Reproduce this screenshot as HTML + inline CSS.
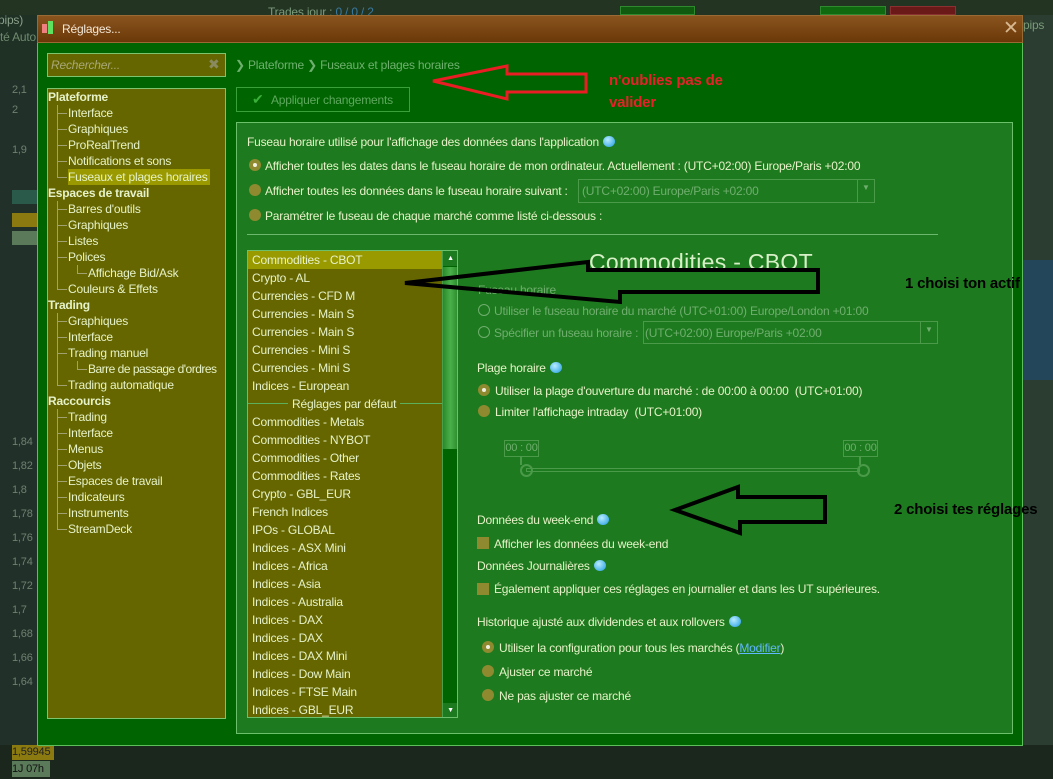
<!DOCTYPE html>
<html><head><meta charset="utf-8"><style>
*{margin:0;padding:0;box-sizing:border-box}
body{width:1053px;height:779px;overflow:hidden;background:#1f3024;font-family:"Liberation Sans",sans-serif;font-size:12px;color:#e6f2c8;position:relative;letter-spacing:-0.2px}
.a{position:absolute;white-space:nowrap}
.dlg{position:absolute;left:37px;top:15px;width:986px;height:731px;background:#006400;border:1px solid #5cbf5c;border-top:none}
.title{position:absolute;left:37px;top:15px;width:986px;height:28px;background:linear-gradient(#8a541e,#6a3808);border:1px solid #9a6a34}
.tree{left:47px;top:88px;width:179px;height:631px;background:#666600;border:1px solid #7ec46e}
.tr{position:absolute;height:16px;line-height:16px}
.c::before{content:"";position:absolute;left:-11px;top:8px;width:10px;border-top:1px solid #a0a070}
.vl{position:absolute;border-left:1px solid #a0a070}
.panel{left:236px;top:122px;width:777px;height:612px;background:#1e7a1e;border:1px solid #6cc06c}
.rad{position:absolute;width:12px;height:12px;border-radius:50%;background:#8f8a30}
.rad.on::after{content:"";position:absolute;left:4px;top:4px;width:4px;height:4px;border-radius:50%;background:#f0f0e0}
.bub{display:inline-block;width:12px;height:11px;border-radius:50%;background:radial-gradient(circle at 40% 35%,#b8ecff,#1a9ae0);vertical-align:-1px;margin-left:4px}
.list{left:247px;top:250px;width:211px;height:468px;background:#666600;border:1px solid #6cc06c;overflow:hidden}
.li{position:absolute;left:4px;height:18px;line-height:18px;font-size:12px}
.dis{color:#6fae6f}
.cb{position:absolute;width:12px;height:12px;background:#8f8a30}
</style></head><body>
<div class="a" style="left:0;top:0;width:1053px;height:15px;background:#233423"></div>
<div class="a" style="left:-2px;top:13px;color:#8aa08a">pips)</div>
<div class="a" style="left:0;top:30px;color:#6f8a6f">té Auto</div>
<div class="a" style="left:268px;top:5px;color:#7a9a7a">Trades jour : <span style="color:#3a7aa0">0 / 0 / 2</span></div>
<div class="a" style="left:620px;top:6px;width:75px;height:9px;background:#0f5a0f;border:1px solid #2f8a2f"></div>
<div class="a" style="left:820px;top:6px;width:66px;height:9px;background:#0f6a0f;border:1px solid #2f8a2f"></div>
<div class="a" style="left:890px;top:6px;width:66px;height:9px;background:#6a1818;border:1px solid #8a3030"></div>
<div class="a" style="left:1022px;top:15px;width:31px;height:764px;background:#2a3d30"></div>
<div class="a" style="left:1023px;top:18px;color:#7a9a7a">pips</div>
<div class="a" style="left:1023px;top:260px;width:30px;height:120px;background:#24465a"></div>
<div class="a" style="left:0;top:745px;width:1053px;height:34px;background:#1b261d"></div>
<div class="a" style="left:12px;top:744px;width:42px;height:16px;background:#8a7a10;color:#222;font-size:11px;line-height:16px">1,59945</div>
<div class="a" style="left:12px;top:761px;width:38px;height:16px;background:#5a7a5a;color:#111;font-size:11px;line-height:16px">1J 07h</div>
<div class="a" style="left:0;top:80px;width:37px;height:665px;background:#22302a"></div>
<div class="a" style="left:12px;top:80px;color:#6f806f;font-size:11px;line-height:20px">2,1<br>2<br><br>1,9</div>
<div class="a" style="left:12px;top:190px;width:25px;height:14px;background:#2a5a4a"></div>
<div class="a" style="left:12px;top:213px;width:25px;height:14px;background:#8a7a10"></div>
<div class="a" style="left:12px;top:231px;width:25px;height:14px;background:#5a7a5a"></div>
<div class="a" style="left:12px;top:430px;color:#6f806f;font-size:11px;line-height:24px">1,84<br>1,82<br>1,8<br>1,78<br>1,76<br>1,74<br>1,72<br>1,7<br>1,68<br>1,66<br>1,64</div>
<div class="dlg"></div>
<div class="title"></div>
<div class="a" style="left:42px;top:24px;width:5px;height:9px;background:#f08080"></div>
<div class="a" style="left:48px;top:21px;width:5px;height:13px;background:#60e060"></div>
<div class="a" style="left:62px;top:22px;color:#f4e8d8">Réglages...</div>
<div class="a" style="left:1003px;top:17px;color:#d8b890;font-size:19px">✕</div>
<div class="a" style="left:47px;top:53px;width:179px;height:24px;background:#666600;border:1px solid #7ec46e"></div>
<div class="a" style="left:51px;top:58px;color:#a8a878;font-style:italic">Rechercher...</div>
<div class="a" style="left:208px;top:56px;color:#8a8a60;font-size:14px">✖</div>
<div class="a tree"></div>
<div class="a" style="left:48px;top:89px;width:179px">
<div class="vl" style="left:9px;top:16px;height:73px"></div>
<div class="vl" style="left:9px;top:112px;height:89px"></div>
<div class="vl" style="left:29px;top:176px;height:9px"></div>
<div class="vl" style="left:9px;top:224px;height:73px"></div>
<div class="vl" style="left:29px;top:272px;height:9px"></div>
<div class="vl" style="left:9px;top:320px;height:121px"></div>
</div>
<div class="a" style="left:48px;top:89px;width:178px">
<div class="tr" style="top:0;left:0;font-weight:bold">Plateforme</div>
<div class="tr c" style="top:16px;left:20px">Interface</div>
<div class="tr c" style="top:32px;left:20px">Graphiques</div>
<div class="tr c" style="top:48px;left:20px">ProRealTrend</div>
<div class="tr c" style="top:64px;left:20px">Notifications et sons</div>
<div class="tr c" style="top:80px;left:20px;background:#9a9a00;padding-right:2px">Fuseaux et plages horaires</div>
<div class="tr" style="top:96px;left:0;font-weight:bold">Espaces de travail</div>
<div class="tr c" style="top:112px;left:20px">Barres d'outils</div>
<div class="tr c" style="top:128px;left:20px">Graphiques</div>
<div class="tr c" style="top:144px;left:20px">Listes</div>
<div class="tr c" style="top:160px;left:20px">Polices</div>
<div class="tr c" style="top:176px;left:40px">Affichage Bid/Ask</div>
<div class="tr c" style="top:192px;left:20px">Couleurs &amp; Effets</div>
<div class="tr" style="top:208px;left:0;font-weight:bold">Trading</div>
<div class="tr c" style="top:224px;left:20px">Graphiques</div>
<div class="tr c" style="top:240px;left:20px">Interface</div>
<div class="tr c" style="top:256px;left:20px">Trading manuel</div>
<div class="tr c" style="top:272px;left:40px;letter-spacing:-0.5px">Barre de passage d'ordres</div>
<div class="tr c" style="top:288px;left:20px">Trading automatique</div>
<div class="tr" style="top:304px;left:0;font-weight:bold">Raccourcis</div>
<div class="tr c" style="top:320px;left:20px">Trading</div>
<div class="tr c" style="top:336px;left:20px">Interface</div>
<div class="tr c" style="top:352px;left:20px">Menus</div>
<div class="tr c" style="top:368px;left:20px">Objets</div>
<div class="tr c" style="top:384px;left:20px">Espaces de travail</div>
<div class="tr c" style="top:400px;left:20px">Indicateurs</div>
<div class="tr c" style="top:416px;left:20px">Instruments</div>
<div class="tr c" style="top:432px;left:20px">StreamDeck</div>
</div>
<div class="a" style="left:235px;top:58px;color:#6fb06f;font-size:12px">❯ Plateforme ❯ Fuseaux et plages horaires</div>
<div class="a" style="left:236px;top:87px;width:174px;height:25px;border:1px solid #3aa03a"></div>
<div class="a" style="left:252px;top:91px;color:#3ab03a;font-size:14px">✔</div>
<div class="a" style="left:271px;top:93px;color:#5fa85f">Appliquer changements</div>
<div class="a panel"></div>
<div class="a" style="left:247px;top:135px">Fuseau horaire utilisé pour l'affichage des données dans l'application<span class="bub"></span></div>
<div class="rad on" style="left:249px;top:159px"></div>
<div class="a" style="left:265px;top:159px">Afficher toutes les dates dans le fuseau horaire de mon ordinateur. Actuellement : (UTC+02:00) Europe/Paris +02:00</div>
<div class="rad" style="left:249px;top:184px"></div>
<div class="a" style="left:265px;top:184px">Afficher toutes les données dans le fuseau horaire suivant :</div>
<div class="a" style="left:578px;top:179px;width:297px;height:24px;border:1px solid #4a9a4a"></div>
<div class="a dis" style="left:582px;top:184px">(UTC+02:00) Europe/Paris +02:00</div>
<div class="a" style="left:857px;top:180px;height:22px;border-left:1px solid #4a9a4a;width:1px"></div>
<div class="a dis" style="left:862px;top:183px;font-size:8px">▼</div>
<div class="rad" style="left:249px;top:209px"></div>
<div class="a" style="left:265px;top:209px">Paramétrer le fuseau de chaque marché comme listé ci-dessous :</div>
<div class="a" style="left:247px;top:234px;width:691px;border-top:1px solid #6cb86c"></div>
<div class="a list">
<div class="a" style="left:0;top:0;width:194px;height:18px;background:#999900"></div>
<div class="li" style="top:0">Commodities - CBOT</div>
<div class="li" style="top:18px">Crypto - AL</div>
<div class="li" style="top:36px">Currencies - CFD M</div>
<div class="li" style="top:54px">Currencies - Main S</div>
<div class="li" style="top:72px">Currencies - Main S</div>
<div class="li" style="top:90px">Currencies - Mini S</div>
<div class="li" style="top:108px">Currencies - Mini S</div>
<div class="li" style="top:126px">Indices - European</div>
<div class="a" style="left:0;top:152px;width:194px;border-top:1px solid #5cb05c"></div>
<div class="li" style="top:144px;left:40px;background:#666600;padding:0 4px">Réglages par défaut</div>
<div class="li" style="top:162px">Commodities - Metals</div>
<div class="li" style="top:180px">Commodities - NYBOT</div>
<div class="li" style="top:198px">Commodities - Other</div>
<div class="li" style="top:216px">Commodities - Rates</div>
<div class="li" style="top:234px">Crypto - GBL_EUR</div>
<div class="li" style="top:252px">French Indices</div>
<div class="li" style="top:270px">IPOs - GLOBAL</div>
<div class="li" style="top:288px">Indices - ASX Mini</div>
<div class="li" style="top:306px">Indices - Africa</div>
<div class="li" style="top:324px">Indices - Asia</div>
<div class="li" style="top:342px">Indices - Australia</div>
<div class="li" style="top:360px">Indices - DAX</div>
<div class="li" style="top:378px">Indices - DAX</div>
<div class="li" style="top:396px">Indices - DAX Mini</div>
<div class="li" style="top:414px">Indices - Dow Main</div>
<div class="li" style="top:432px">Indices - FTSE Main</div>
<div class="li" style="top:450px">Indices - GBL_EUR</div>
<div class="a" style="left:194px;top:0;width:16px;height:467px;background:#006400;border-left:1px solid #4aa04a"></div>
<div class="a" style="left:195px;top:16px;width:15px;height:182px;background:linear-gradient(90deg,#2a8a2a,#4ab04a,#2a8a2a)"></div>
<div class="a" style="left:195px;top:0;width:15px;height:15px;background:#1e7a1e;color:#fff;font-size:7px;text-align:center;line-height:15px">▲</div>
<div class="a" style="left:195px;top:452px;width:15px;height:15px;background:#1e7a1e;color:#fff;font-size:7px;text-align:center;line-height:15px">▼</div>
</div>
<div class="a" style="left:589px;top:249px;font-size:23px;color:#d8f0c8;letter-spacing:0.3px">Commodities - CBOT</div>
<div class="a dis" style="left:478px;top:283px">Fuseau horaire</div>
<div class="a dis" style="left:478px;top:304px;width:12px;height:12px;border:1px solid #6fae6f;border-radius:50%"></div>
<div class="a dis" style="left:494px;top:304px">Utiliser le fuseau horaire du marché (UTC+01:00) Europe/London +01:00</div>
<div class="a dis" style="left:478px;top:326px;width:12px;height:12px;border:1px solid #6fae6f;border-radius:50%"></div>
<div class="a dis" style="left:494px;top:326px">Spécifier un fuseau horaire :</div>
<div class="a" style="left:643px;top:321px;width:295px;height:23px;border:1px solid #4a9a4a"></div>
<div class="a dis" style="left:645px;top:326px">(UTC+02:00) Europe/Paris +02:00</div>
<div class="a" style="left:920px;top:322px;height:21px;border-left:1px solid #4a9a4a;width:1px"></div>
<div class="a dis" style="left:925px;top:325px;font-size:8px">▼</div>
<div class="a" style="left:477px;top:361px">Plage horaire<span class="bub"></span></div>
<div class="rad on" style="left:478px;top:384px"></div>
<div class="a" style="left:495px;top:384px">Utiliser la plage d'ouverture du marché : de 00:00 à 00:00&nbsp; (UTC+01:00)</div>
<div class="rad" style="left:478px;top:405px"></div>
<div class="a" style="left:495px;top:405px">Limiter l'affichage intraday&nbsp; (UTC+01:00)</div>
<div class="a dis" style="left:504px;top:440px;width:35px;height:17px;border:1px solid #4a9a4a;font-size:11px;text-align:center;line-height:15px">00 : 00</div>
<div class="a dis" style="left:843px;top:440px;width:35px;height:17px;border:1px solid #4a9a4a;font-size:11px;text-align:center;line-height:15px">00 : 00</div>
<div class="a" style="left:520px;top:457px;height:8px;border-left:2px solid #4a9a4a"></div>
<div class="a" style="left:859px;top:457px;height:8px;border-left:2px solid #4a9a4a"></div>
<div class="a" style="left:526px;top:468px;width:334px;height:4px;border:1px solid #4a9a4a"></div>
<div class="a" style="left:520px;top:464px;width:13px;height:13px;border:2px solid #4a9a4a;border-radius:50%"></div>
<div class="a" style="left:857px;top:464px;width:13px;height:13px;border:2px solid #4a9a4a;border-radius:50%"></div>
<div class="a" style="left:477px;top:513px">Données du week-end<span class="bub"></span></div>
<div class="cb" style="left:477px;top:537px"></div>
<div class="a" style="left:494px;top:537px">Afficher les données du week-end</div>
<div class="a" style="left:477px;top:559px">Données Journalières<span class="bub"></span></div>
<div class="cb" style="left:477px;top:583px"></div>
<div class="a" style="left:494px;top:582px">Également appliquer ces réglages en journalier et dans les UT supérieures.</div>
<div class="a" style="left:477px;top:615px">Historique ajusté aux dividendes et aux rollovers<span class="bub"></span></div>
<div class="rad on" style="left:482px;top:641px"></div>
<div class="a" style="left:499px;top:641px">Utiliser la configuration pour tous les marchés (<span style="color:#60b8ff;text-decoration:underline">Modifier</span>)</div>
<div class="rad" style="left:482px;top:665px"></div>
<div class="a" style="left:499px;top:665px">Ajuster ce marché</div>
<div class="rad" style="left:482px;top:689px"></div>
<div class="a" style="left:499px;top:689px">Ne pas ajuster ce marché</div>
<svg class="a" style="left:0;top:0" width="1053" height="779">
<polygon points="433,81 507,66 507,74 586,74 586,92 507,92 507,99" fill="none" stroke="#ea1c24" stroke-width="3"/>
<polygon points="405,283 588,262 588,270 818,270 818,292 620,292 620,302" fill="none" stroke="#000" stroke-width="4"/>
<polygon points="675,510 738,487 738,497 825,497 825,522 740,522 740,533" fill="none" stroke="#000" stroke-width="4"/>
</svg>
<div class="a" style="left:609px;top:70px;color:#e8202a;font-weight:bold;font-size:15px;line-height:22px">n'oublies pas de<br>valider</div>
<div class="a" style="left:905px;top:275px;color:#000;font-weight:bold;font-size:15px">1 choisi ton actif</div>
<div class="a" style="left:894px;top:501px;color:#000;font-weight:bold;font-size:15px">2 choisi tes réglages</div>
</body></html>
